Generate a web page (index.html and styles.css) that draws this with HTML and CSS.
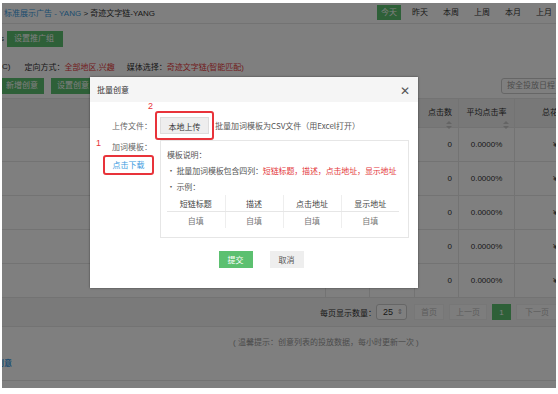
FILE: index.html
```html
<!DOCTYPE html>
<html lang="zh-CN">
  <head>
    <meta charset="UTF-8" />
    <title>批量创意</title>
    <link rel="stylesheet" href="styles.css">
  </head>
  <body>
    <div class="shot">
      <div class="topbar">
        <div class="crumb">
          <span class="link">标准展示广告 - YANG</span> &gt; 奇迹文字链-YANG
        </div>
        <div class="tabs">
          <span class="tab active">今天</span>
          <span class="tab">昨天</span>
          <span class="tab">本周</span>
          <span class="tab">上周</span>
          <span class="tab">本月</span>
          <span class="tab">上月</span>
        </div>
      </div>

      <div class="group-row">
        <span class="frag">s</span>
        <span class="btn-green">设置推广组</span>
      </div>

      <div class="target-row">
        <span class="frag">C)</span>
        <span class="label">定向方式：</span><span class="red">全部地区,兴趣</span>
        <span class="label gap">媒体选择：</span><span class="red">奇迹文字链(智能匹配)</span>
      </div>

      <div class="tool-row">
        <div class="tool-left">
          <span class="btn-green">新增创意</span>
          <span class="btn-green">设置创意</span>
        </div>
        <div class="search">按全投放日程</div>
      </div>

      <div class="grid">
        <div class="row head">
          <div class="cell c1"></div>
          <div class="cell c2"></div>
          <div class="cell c3"></div>
          <div class="cell c4"></div>
          <div class="cell c5 right">点击数<span class="sort"></span></div>
          <div class="cell c6 center">平均点击率<span class="sort"></span></div>
          <div class="cell c7">总花费</div>
        </div>
        <div class="row">
          <div class="cell c1"></div><div class="cell c2"></div><div class="cell c3"></div><div class="cell c4"></div>
          <div class="cell c5 right">0</div><div class="cell c6 center">0.0000%</div><div class="cell c7">¥0.00</div>
        </div>
        <div class="row">
          <div class="cell c1"></div><div class="cell c2"></div><div class="cell c3"></div><div class="cell c4"></div>
          <div class="cell c5 right">0</div><div class="cell c6 center">0.0000%</div><div class="cell c7">¥0.00</div>
        </div>
        <div class="row">
          <div class="cell c1"></div><div class="cell c2"></div><div class="cell c3"></div><div class="cell c4"></div>
          <div class="cell c5 right">0</div><div class="cell c6 center">0.0000%</div><div class="cell c7">¥0.00</div>
        </div>
        <div class="row">
          <div class="cell c1"></div><div class="cell c2"></div><div class="cell c3"></div><div class="cell c4"></div>
          <div class="cell c5 right">0</div><div class="cell c6 center">0.0000%</div><div class="cell c7">¥0.00</div>
        </div>
        <div class="row">
          <div class="cell c1"></div><div class="cell c2"></div><div class="cell c3"></div><div class="cell c4"></div>
          <div class="cell c5 right">0</div><div class="cell c6 center">0.0000%</div><div class="cell c7">¥0.00</div>
        </div>
      </div>

      <div class="pager">
        <span class="per">每页显示数量：</span>
        <span class="select">25<span class="updown">&#8661;</span></span>
        <span class="page first">首页</span>
        <span class="page prev">上一页</span>
        <span class="page current">1</span>
        <span class="page next">下一页</span>
      </div>

      <div class="tip">( 温馨提示：创意列表的投放数据，每小时更新一次 )</div>
      <div class="more"><span class="link">创意</span></div>

      <div class="mask"></div>

      <div class="modal">
        <div class="modal-head">
          <span>批量创意</span>
          <span class="close">&#x2715;</span>
        </div>
        <div class="modal-body">
          <div class="form-row">
            <span class="form-label">上传文件：</span>
            <span class="mark mark-upload">
              <span class="num">2</span>
              <span class="btn-gray">本地上传</span>
            </span>
            <span class="hint">批量加词模板为CSV文件（用Excel打开）</span>
          </div>
          <div class="form-row top">
            <div class="side">
              <span class="num num1">1</span>
              <span class="form-label">加词模板：</span>
              <span class="mark mark-down">点击下载</span>
            </div>
            <div class="panel">
              <p>模板说明：</p>
              <p>• 批量加词模板包含四列：<span class="red">短链标题，描述，点击地址，显示地址</span></p>
              <p>• 示例：</p>
              <table class="sample">
                <tr><th>短链标题</th><th>描述</th><th>点击地址</th><th>显示地址</th></tr>
                <tr><td>自填</td><td>自填</td><td>自填</td><td>自填</td></tr>
              </table>
            </div>
          </div>
          <div class="actions">
            <span class="btn-submit">提交</span>
            <span class="btn-cancel">取消</span>
          </div>
        </div>
      </div>
    </div>
  </body>
</html>
```

FILE: styles.css
```css
body {
  margin: 0;
  background: #fff;
  font-family: "Liberation Sans", "Noto Sans CJK SC", sans-serif;
  font-size: 8px;
  color: #333;
}
.shot {
  position: relative;
  width: 554px;
  height: 385px;
  margin: 3px 0 0 2px;
  overflow: hidden;
  background: #fff;
}
.link {
  color: #3a9ae0;
}
.red {
  color: #e4393c;
}
.frag {
  margin-right: 6px;
}

/* top bar */
.topbar {
  height: 20px;
  display: flex;
  justify-content: space-between;
  align-items: center;
  border-bottom: 1px solid #e6e6e6;
}
.crumb {
  margin: -2px 0 0 2px;
  white-space: nowrap;
}
.tabs {
  display: flex;
  gap: 7px;
  margin-top: -2px;
}
.tab {
  width: 24px;
  height: 15px;
  line-height: 15px;
  text-align: center;
}
.tab.active {
  background: #5cc070;
  color: #fff;
}

.btn-green {
  display: inline-block;
  height: 16px;
  line-height: 16px;
  padding: 0 6px;
  background: #5cc070;
  color: #fff;
  white-space: nowrap;
}

.group-row {
  height: 23px;
  display: flex;
  align-items: center;
  padding-top: 3px;
}
.group-row .frag {
  margin: 0 3px 0 -2px;
}
.group-row .btn-green {
  width: 42px;
  padding: 0 7px;
}

.target-row {
  height: 24px;
  display: flex;
  align-items: center;
  padding-top: 4px;
}
.target-row .frag {
  margin-right: 14px;
}
.target-row .gap {
  margin-left: 12px;
}

.tool-row {
  height: 20px;
  display: flex;
  justify-content: space-between;
  align-items: flex-start;
}
.tool-left {
  display: flex;
  gap: 7px;
  margin-left: -2px;
}
.search {
  width: 58px;
  height: 14px;
  line-height: 14px;
  border: 1px solid #ccc;
  border-radius: 3px;
  padding-left: 5px;
  color: #999;
  margin-right: -10px;
  white-space: nowrap;
}

/* data grid */
.grid {
  border-top: 1px solid #e6e6e6;
}
.row {
  display: flex;
  height: 33px;
  border-bottom: 1px solid #e6e6e6;
}
.row.head {
  height: 28px;
  background: #f0f0f0;
}
.cell {
  flex-shrink: 0;
  border-right: 1px solid #e6e6e6;
  display: flex;
  align-items: center;
  padding: 0 6px;
  box-sizing: border-box;
  white-space: nowrap;
}
.head .cell {
  align-items: flex-start;
  padding-top: 7px;
  position: relative;
}
.c1 { width: 250px; border-right: none; }
.c2 { width: 74px; }
.c3 { width: 44px; }
.c4 { width: 45px; }
.c5 { width: 44px; }
.c6 { width: 56px; }
.c7 { width: 80px; border-right: none; padding-left: 38px; }
.head .c7 { padding-left: 27px; }
.right { justify-content: flex-end; }
.center { justify-content: center; }
.sort {
  position: absolute;
  bottom: 3px;
  right: 6px;
  width: 0;
  height: 0;
  border-left: 3px solid transparent;
  border-right: 3px solid transparent;
  border-bottom: 3px solid #c8c8c8;
}
.sort::after {
  content: "";
  position: absolute;
  top: 5px;
  left: -3px;
  border-left: 3px solid transparent;
  border-right: 3px solid transparent;
  border-top: 3px solid #c8c8c8;
}
.c6 .sort { right: 5px; }

/* pager */
.pager {
  height: 28px;
  background: #f5f5f5;
  border-bottom: 1px solid #e6e6e6;
  display: flex;
  align-items: center;
  padding-left: 318px;
  white-space: nowrap;
}
.per {
  width: 57px;
}
.select {
  flex-shrink: 0;
  width: 31px;
  height: 16px;
  line-height: 14px;
  border: 1px solid #ccc;
  border-radius: 3px;
  background: #fff;
  box-sizing: border-box;
  padding: 0 3px 0 6px;
  font-size: 9px;
  display: flex;
  justify-content: space-between;
}
.updown {
  font-size: 7px;
  color: #999;
}
.page {
  flex-shrink: 0;
  height: 16px;
  line-height: 16px;
  box-sizing: border-box;
  text-align: center;
  background: #fafafa;
  border: 1px solid #eee;
  color: #bbb;
  margin-left: 5px;
}
.first { width: 30px; margin-left: 7px; }
.prev { width: 38px; }
.current {
  width: 19px;
  background: #5cc070;
  color: #fff;
  border-color: #5cc070;
}
.next { width: 42px; }

.tip {
  padding: 9px 0 0 231px;
  color: #999;
  height: 16px;
}
.more {
  height: 28px;
  line-height: 24px;
  border-bottom: 1px solid #e6e6e6;
  margin-left: -6px;
  font-weight: bold;
}

.mask {
  position: absolute;
  left: 0;
  top: 0;
  right: 0;
  bottom: 0;
  background: rgba(0, 0, 0, 0.5);
}

/* modal */
.modal {
  position: absolute;
  left: 88px;
  top: 74px;
  width: 328px;
  height: 211px;
  background: #fff;
  box-shadow: 0 0 2px rgba(0, 0, 0, 0.5);
  font-family: "Noto Sans CJK SC", sans-serif;
}
.modal-head {
  height: 25px;
  background: #f5f5f5;
  display: flex;
  justify-content: space-between;
  align-items: center;
  padding: 0 8px 0 7px;
}
.close {
  font-size: 12px;
  color: #555;
}
.modal-body {
  padding: 8px 0 0 0;
}
.form-row {
  display: flex;
  align-items: center;
  height: 30px;
  white-space: nowrap;
}
.form-row.top {
  align-items: flex-start;
  height: auto;
}
.form-label {
  color: #666;
  width: 45px;
  margin-left: 22px;
}
.mark {
  border: 2px solid #e8333a;
  border-radius: 3px;
  box-sizing: border-box;
  position: relative;
}
.mark-upload {
  width: 59px;
  height: 29px;
  display: flex;
  align-items: center;
  justify-content: center;
  margin-left: -2px;
}
.num {
  position: absolute;
  color: #e8333a;
  font-size: 9px;
  font-family: "Liberation Sans", sans-serif;
}
.mark-upload .num {
  left: -9px;
  top: -12px;
}
.btn-gray {
  display: inline-block;
  width: 49px;
  height: 17px;
  line-height: 17px;
  text-align: center;
  background: #eee;
  border: 1px solid #ddd;
  box-sizing: border-box;
}
.hint {
  margin-left: 1px;
  color: #555;
}
.side {
  width: 70px;
  flex-shrink: 0;
  position: relative;
  padding-top: 2px;
}
.side .form-label {
  display: block;
  margin-left: 22px;
  line-height: 10px;
}
.num1 {
  left: 6px;
  top: -2px;
}
.mark-down {
  display: block;
  width: 51px;
  height: 20px;
  line-height: 16px;
  margin: 3px 0 0 13px;
  color: #3a9ae0;
  text-align: center;
}
.panel {
  width: 249px;
  height: 98px;
  border: 1px solid #e6e6e6;
  box-sizing: border-box;
  padding: 8px 5px 0 6px;
  color: #555;
}
.panel p {
  margin: 0 0 5px 0;
  line-height: 11px;
  letter-spacing: -0.15px;
}
.sample {
  border-collapse: collapse;
  width: 232px;
  margin-top: -2px;
  table-layout: fixed;
}
.sample th,
.sample td {
  font-weight: normal;
  text-align: center;
  height: 16px;
  padding: 0;
  border-right: 1px solid #eee;
}
.sample th:last-child,
.sample td:last-child {
  border-right: none;
}
.sample th {
  border-bottom: 1px solid #e6e6e6;
  color: #444;
}
.sample td {
  color: #777;
}
.actions {
  display: flex;
  justify-content: center;
  gap: 17px;
  margin-top: 13px;
  padding-left: 14px;
}
.btn-submit,
.btn-cancel {
  width: 34px;
  height: 17px;
  line-height: 17px;
  text-align: center;
}
.btn-submit {
  background: #5cc070;
  color: #fff;
}
.btn-cancel {
  background: #eee;
  color: #555;
}
```
